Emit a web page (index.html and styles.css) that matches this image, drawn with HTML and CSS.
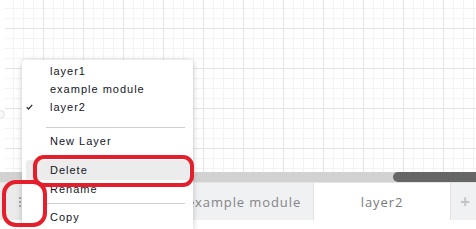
FILE: index.html
```html
<!DOCTYPE html>
<html>
<head>
<meta charset="utf-8">
<link rel="stylesheet" href="styles.css">
</head>
<body>
<div class="app">
  <div class="workspace">
    <div class="grid"></div>
    <span class="handle"></span>
  </div>
  <div class="scrollbar"><div class="thumb"></div></div>
  <div class="tabbar">
    <div class="menu-btn"><span class="dots"><i></i><i></i><i></i></span></div>
    <div class="tab">layer1</div>
    <div class="tab">example module</div>
    <div class="tab active">layer2</div>
    <div class="tab add">+</div>
  </div>
  <div class="footer"></div>

  <div class="menu">
    <div class="item">layer1</div>
    <div class="item">example module</div>
    <div class="item checked"><svg class="check" width="7" height="6" viewBox="0 0 7 6"><path d="M0.8 3.2 L2.6 5 L6.2 0.8" fill="none" stroke="#333" stroke-width="1.3"/></svg>layer2</div>
    <div class="sep sep-first"></div>
    <div class="item">New Layer</div>
    <div class="sep sep-mid"></div>
    <div class="item hover">Delete</div>
    <div class="item">Rename</div>
    <div class="sep sep-last"></div>
    <div class="item">Copy</div>
  </div>

  <div class="mark mark-delete"></div>
  <div class="mark mark-button"></div>
</div>
</body>
</html>
```
FILE: styles.css
```css
html, body {
  margin: 0;
  padding: 0;
  background: #fff;
  overflow: hidden;
}
.app {
  position: relative;
  width: 476px;
  height: 229px;
  overflow: hidden;
  display: flex;
  flex-direction: column;
  font-family: "Liberation Sans", Arial, sans-serif;
}
.workspace {
  position: relative;
  height: 172px;
  display: flex;
}
.grid {
  flex: 1;
  margin-left: 5px;
  background-color: #fff;
  background-image:
    linear-gradient(to right, #e4e4e4 1px, transparent 1px),
    linear-gradient(to bottom, #e4e4e4 1px, transparent 1px),
    linear-gradient(to right, #f3f3f3 1px, transparent 1px),
    linear-gradient(to bottom, #f3f3f3 1px, transparent 1px);
  background-size: 40px 40px, 40px 40px, 10px 10px, 10px 10px;
  background-position: 38px 28px, 38px 28px, 8px 8px, 8px 8px;
}
.handle {
  position: absolute;
  left: -4px;
  top: 110px;
  width: 7px;
  height: 7px;
  border: 1px solid #e2e2e2;
  border-radius: 50%;
  background: #f7f7f7;
}
.scrollbar {
  height: 10px;
  background: #d2d2d2;
  display: flex;
  justify-content: flex-end;
}
.thumb {
  width: 83px;
  background: #666;
  border-radius: 6px 0 0 6px;
}
.tabbar {
  height: 38px;
  display: flex;
  background: #f0f1f3;
  border-top: 1px solid #e4e4e4;
  box-sizing: border-box;
}
.menu-btn {
  width: 37px;
  background: #ebebeb;
  display: flex;
  align-items: center;
  justify-content: center;
}
.dots {
  display: flex;
  flex-direction: column;
  gap: 2px;
  margin-left: 3px;
}
.dots i {
  display: block;
  width: 2px;
  height: 2px;
  background: #a8a8a8;
}
.tab {
  width: 138px;
  display: flex;
  align-items: center;
  justify-content: center;
  font-family: "Open Sans", sans-serif;
  font-size: 13px;
  letter-spacing: 0.9px;
  color: #858585;
}
.tab.active {
  background: #fff;
  border-left: 1px solid #e2e2e2;
  border-right: 1px solid #e2e2e2;
  box-sizing: border-box;
  color: #7a7a7a;
}
.tab.add {
  width: auto;
  flex: 1;
  font-size: 17px;
  font-weight: 700;
  color: #c4c4c4;
  padding-left: 4px;
}
.footer {
  flex: 1;
  background: #fff;
}
.menu {
  position: absolute;
  left: 22px;
  top: 60px;
  width: 171px;
  height: 169px;
  background: #fff;
  border-radius: 4px 4px 0 0;
  box-shadow: 0 1px 6px rgba(0, 0, 0, 0.22);
  padding-top: 2px;
  box-sizing: border-box;
}
.item {
  position: relative;
  height: 18px;
  line-height: 18px;
  padding-left: 28px;
  font-size: 11px;
  letter-spacing: 1px;
  color: #15151f;
  white-space: nowrap;
}
.item.hover {
  height: 20px;
  line-height: 20px;
  margin: 0 4px 0 4px;
  padding-left: 24px;
  background: #ececec;
  border-radius: 3px;
}
.check {
  position: absolute;
  left: 4px;
  top: 6px;
}
.sep {
  height: 1px;
  background: #cfcfcf;
  margin-left: 24px;
  margin-right: 8px;
}
.sep-first {
  margin-top: 11px;
  margin-bottom: 4px;
}
.sep-mid {
  margin-top: 5px;
  margin-bottom: 4px;
}
.sep-last {
  margin-top: 5px;
  margin-bottom: 4px;
}
.mark {
  position: absolute;
  border: 4px solid #e41f2b;
  box-sizing: border-box;
}
.mark-delete {
  left: 33px;
  top: 155px;
  width: 161px;
  height: 32px;
  border-radius: 11px;
}
.mark-button {
  left: 2px;
  top: 180px;
  width: 45px;
  height: 47px;
  border-radius: 14px;
}
```
